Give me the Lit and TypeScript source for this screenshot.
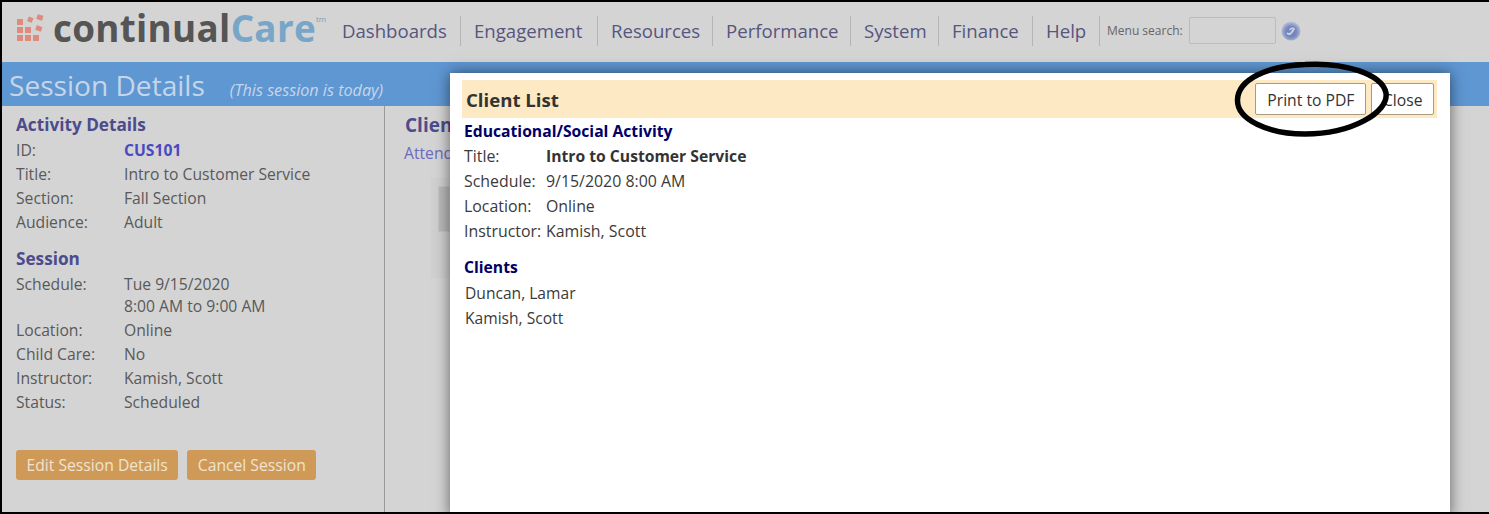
import { css, html, LitElement } from 'lit';
import { customElement } from 'lit/decorators.js';

const NAV_ITEMS = ['Dashboards', 'Engagement', 'Resources', 'Performance', 'System', 'Finance', 'Help'];

const ACTIVITY_ROWS = [
  ['ID:', 'CUS101'],
  ['Title:', 'Intro to Customer Service'],
  ['Section:', 'Fall Section'],
  ['Audience:', 'Adult'],
];

const SESSION_ROWS = [
  ['Schedule:', 'Tue 9/15/2020'],
  ['', '8:00 AM to 9:00 AM'],
  ['Location:', 'Online'],
  ['Child Care:', 'No'],
  ['Instructor:', 'Kamish, Scott'],
  ['Status:', 'Scheduled'],
];

const MODAL_ROWS = [
  ['Title:', 'Intro to Customer Service'],
  ['Schedule:', '9/15/2020 8:00 AM'],
  ['Location:', 'Online'],
  ['Instructor:', 'Kamish, Scott'],
];

@customElement('app-root')
export class AppRoot extends LitElement {
  static styles = css`
    :host {
      display: block;
      position: relative;
      width: 1489px;
      height: 514px;
      box-sizing: border-box;
      overflow: hidden;
      border: solid #000;
      border-width: 2px 0 2px 2px;
      background: #d4d4d4;
      font-family: 'Open Sans', 'Noto Sans', sans-serif;
      font-size: 15.7px;
      color: #595959;
    }
    .header {
      display: flex;
      align-items: center;
      height: 60px;
      box-sizing: border-box;
      padding: 0 0 3px 14px;
    }
    .logo {
      display: flex;
      align-items: center;
      gap: 6px;
      width: 313px;
      flex: none;
      padding-bottom: 5px;
    }
    .logo svg {
      flex: none;
    }
    .logo-text {
      font-size: 36.8px;
      font-weight: 700;
      line-height: 50px;
      color: #555;
      letter-spacing: 0.3px;
      white-space: nowrap;
    }
    .logo-text span {
      color: #78a6c8;
    }
    .logo-text sup {
      font-size: 8px;
      font-weight: 400;
      color: #8a9aa6;
      vertical-align: 20px;
      line-height: 0;
      letter-spacing: 0;
    }
    .nav {
      display: grid;
      grid-template-columns: 132px 137px 115px 138px 88px 94px 67px;
      height: 30px;
    }
    .nav-item {
      padding-left: 13px;
      border-right: 1px solid #b4b4b4;
      font-size: 18.6px;
      line-height: 30px;
      color: #56567f;
      white-space: nowrap;
    }
    .search {
      display: flex;
      align-items: center;
      margin-left: 7px;
      font-size: 12px;
      color: #666;
    }
    .search-input {
      width: 85px;
      height: 25px;
      margin-left: 6px;
      border: 1px solid #bcbcbc;
      border-radius: 2px;
    }
    .search-go {
      width: 20px;
      height: 20px;
      margin-left: 5px;
    }
    .title-bar {
      display: flex;
      align-items: baseline;
      height: 44px;
      padding-left: 7px;
      background: #5f97d3;
      color: #c6d6e8;
    }
    .title-bar h1 {
      margin: 0;
      font-size: 28.1px;
      font-weight: 400;
      line-height: 47px;
    }
    .title-bar em {
      margin-left: 25px;
      font-size: 16.2px;
    }
    .content {
      display: flex;
      height: 406px;
    }
    .details {
      width: 368px;
      padding: 7px 0 0 14px;
      border-right: 1px solid #999;
      box-sizing: content-box;
    }
    h2 {
      margin: 0 0 1px;
      font-size: 17.2px;
      font-weight: 700;
      line-height: 24px;
      color: #4c4c8c;
    }
    .field {
      display: grid;
      grid-template-columns: 108px 1fr;
      line-height: 24px;
    }
    .field.continued {
      margin-top: -2px;
    }
    .code-value {
      font-weight: 700;
      color: #4a4ac0;
    }
    .session {
      margin-top: 13px;
    }
    .actions {
      display: flex;
      gap: 9px;
      margin-top: 36px;
    }
    .action {
      padding: 0 10.5px;
      border-radius: 3px;
      background: #cf9a58;
      color: #f0e3d0;
      font-size: 15.7px;
      line-height: 30px;
    }
    .clients {
      padding: 7px 0 0 20px;
      white-space: nowrap;
    }
    .clients h2 {
      margin: 0;
      font-size: 19px;
    }
    .clients a {
      display: block;
      margin: 5px 0 0 -1px;
      color: #6a6ac0;
    }
    .placeholder {
      width: 19px;
      height: 100px;
      margin: 14px 0 0 26px;
      padding: 8px 0 0 7px;
      box-sizing: border-box;
      background: #d0d0d0;
    }
    .placeholder div {
      height: 44px;
      border: 1px solid #c6c6c6;
      background: #bababa;
    }
    .modal {
      position: absolute;
      left: 448px;
      top: 71px;
      width: 1000px;
      height: 445px;
      padding: 7px 13px 0 12px;
      box-sizing: border-box;
      background: #fff;
      box-shadow: 0 0 14px rgba(0, 0, 0, 0.55);
      color: #3a3a3a;
      font-size: 15.9px;
    }
    .modal-head {
      display: flex;
      align-items: center;
      justify-content: flex-end;
      gap: 5px;
      height: 38px;
      padding: 0 3px 0 4px;
      background: #fde9c3;
    }
    .modal-head h3 {
      margin: 0 auto 0 0;
      font-size: 18.6px;
      font-weight: 700;
      color: #333;
    }
    .modal-btn {
      height: 32px;
      padding: 1px 11px 0;
      box-sizing: border-box;
      border: 1px solid #a99a80;
      border-radius: 2px;
      background: #fff;
      color: #333;
      font: inherit;
      font-size: 15.7px;
    }
    .modal-btn:last-child {
      padding: 1px 10.5px 0;
    }
    .modal h4 {
      margin: 0;
      padding: 1px 0 0 2px;
      font-size: 15.7px;
      font-weight: 700;
      line-height: 25px;
      color: #000066;
    }
    .modal-field {
      display: grid;
      grid-template-columns: 82px 1fr;
      padding-left: 2px;
      line-height: 25px;
    }
    .modal-field b {
      font-size: 15.7px;
      color: #333;
    }
    .modal-fields {
      margin-bottom: 10px;
    }
    .client-list {
      padding: 1px 0 0 3px;
      font-size: 15.6px;
      line-height: 25px;
    }
    .circle {
      position: absolute;
      left: 1232px;
      top: 58px;
      width: 160px;
      height: 78px;
      overflow: visible;
    }
  `;

  render() {
    return html`
      <div class="header">
        <div class="logo">
          <svg width="31" height="28" viewBox="0 0 31 28" fill="#dc8b7c">
            <rect x="1" y="5" width="6" height="6"></rect>
            <rect x="1" y="13" width="6" height="6"></rect>
            <rect x="1" y="21" width="6" height="6"></rect>
            <rect x="9" y="13" width="6" height="6"></rect>
            <rect x="9" y="21" width="6" height="6"></rect>
            <rect x="17" y="21" width="6" height="6"></rect>
            <rect x="12" y="3" width="5" height="5" transform="rotate(20 14 5)"></rect>
            <rect x="21" y="1" width="6" height="5" transform="rotate(15 24 3)"></rect>
            <rect x="20" y="12" width="6" height="5" transform="rotate(20 23 14)"></rect>
          </svg>
          <div class="logo-text">continual<span>Care</span><sup>tm</sup></div>
        </div>
        <nav class="nav">
          ${NAV_ITEMS.map(item => html`<div class="nav-item">${item}</div>`)}
        </nav>
        <div class="search">
          Menu search:
          <div class="search-input"></div>
          <svg class="search-go" viewBox="0 0 20 20">
            <defs>
              <radialGradient id="ball" cx="50%" cy="55%" r="55%">
                <stop offset="0.5" stop-color="#7486bd"></stop>
                <stop offset="1" stop-color="#bcc4d8"></stop>
              </radialGradient>
            </defs>
            <circle cx="10" cy="10" r="9.500" fill="url(#ball)"></circle>
            <path d="M6.500 12.500c1.500 1 3 .5 4-1l2.500-3.500" fill="none" stroke="#c8d0e4" stroke-width="2" stroke-linecap="round"></path>
            <path d="M9 8.500c1-1 2-1.500 3.500-1" fill="none" stroke="#c8d0e4" stroke-width="1.500" stroke-linecap="round"></path>
          </svg>
        </div>
      </div>
      <div class="title-bar">
        <h1>Session Details</h1>
        <em>(This session is today)</em>
      </div>
      <div class="content">
        <div class="details">
          <h2>Activity Details</h2>
          ${ACTIVITY_ROWS.map(([label, value], i) => html`
            <div class="field">
              <span>${label}</span>
              <span class=${i === 0 ? 'code-value' : ''}>${value}</span>
            </div>
          `)}
          <div class="session">
            <h2>Session</h2>
            ${SESSION_ROWS.map(([label, value]) => html`
              <div class="field ${label ? '' : 'continued'}"><span>${label}</span><span>${value}</span></div>
            `)}
          </div>
          <div class="actions">
            <div class="action">Edit Session Details</div>
            <div class="action">Cancel Session</div>
          </div>
        </div>
        <div class="clients">
          <h2>Clients</h2>
          <a>Attendance</a>
          <div class="placeholder"><div></div></div>
        </div>
      </div>
      <div class="modal">
        <div class="modal-head">
          <h3>Client List</h3>
          <button class="modal-btn">Print to PDF</button>
          <button class="modal-btn">Close</button>
        </div>
        <h4>Educational/Social Activity</h4>
        <div class="modal-fields">
          ${MODAL_ROWS.map(([label, value], i) => html`
            <div class="modal-field">
              <span>${label}</span>
              ${i === 0 ? html`<b>${value}</b>` : html`<span>${value}</span>`}
            </div>
          `)}
        </div>
        <h4>Clients</h4>
        <div class="client-list">
          <div>Duncan, Lamar</div>
          <div>Kamish, Scott</div>
        </div>
      </div>
      <svg class="circle" viewBox="0 0 160 78">
        <path d="M71 4.500C110 2 148 14 152 33C155 52 118 74 71 74C35 74 3 60 3.500 40C4 20 32 6 71 4.500Z" fill="none" stroke="#000" stroke-width="5.500"></path>
      </svg>
    `;
  }
}
